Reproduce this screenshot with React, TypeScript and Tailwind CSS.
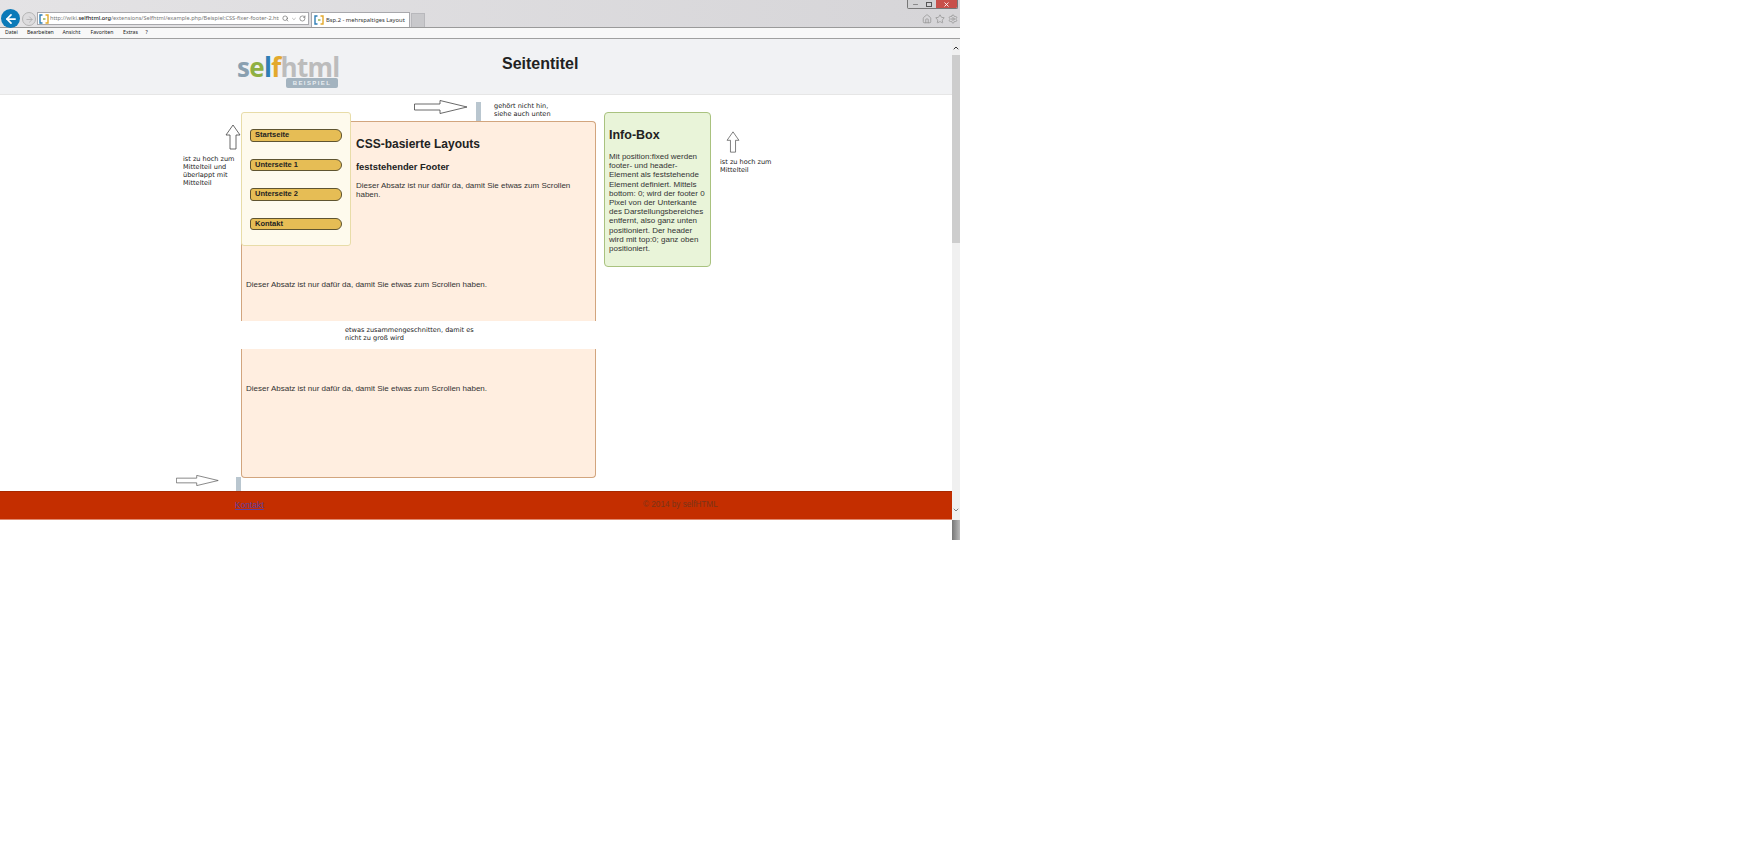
import React from "react";
import { ArrowLeft, ArrowRight, ChevronDown, ChevronUp, Home, RotateCw, Search, Settings, Star, X, Minus } from "lucide-react";

function Favicon() {
  return (
    <svg width="10" height="10" viewBox="0 0 10 10" className="shrink-0">
      <path d="M3.5 1H1v8h2.5" fill="none" stroke="#2f7fb5" strokeWidth="1.4" />
      <path d="M6.5 1H9v8H6.5" fill="none" stroke="#e3a92c" strokeWidth="1.4" />
      <path d="M4 5h2.5" fill="none" stroke="#8fb043" strokeWidth="1.4" />
    </svg>
  );
}

function UpArrow({ className }: { className: string }) {
  return (
    <svg width="16" height="26" viewBox="0 0 16 26" className={className}>
      <path d="M5 25V11H1L8 1l7 10h-4v14z" fill="#fff" stroke="#444" strokeWidth="0.8" />
    </svg>
  );
}

function RightArrow({ w, h, className }: { w: number; h: number; className: string }) {
  return (
    <svg width={w} height={h} viewBox="0 0 54 14" preserveAspectRatio="none" className={className}>
      <path d="M0.5 4H26V0.5L53 7 26 13.5V10H0.5z" fill="#fff" stroke="#444" strokeWidth="0.8" />
    </svg>
  );
}

const notes = "font-['DejaVu_Sans',sans-serif] text-[6.55px] leading-[8px] text-[#222]";

function NavButton({ label }: { label: string }) {
  return (
    <a className="block h-[12.5px] w-[92px] rounded-l-[3px] rounded-r-[6px] border border-[#5f5430] bg-[#e6bd55] pl-[4px] text-[7.5px] font-bold leading-[10px] text-[#222]">
      {label}
    </a>
  );
}

export default function App() {
  return (
    <div className="h-[854px] w-[1755px] overflow-hidden bg-white font-['Liberation_Sans',Arial,sans-serif]">
      <div className="w-[960px]">
        {/* browser toolbar */}
        <div className="relative flex h-[28px] items-end border-b border-[#9a9a9a] bg-gradient-to-r from-[#e4e3e5] to-[#d6d5d8] pl-[1px]">
          <div className="mb-[-1px] flex h-[19px] w-[19px] items-center justify-center rounded-full bg-[#0b7ab8]">
            <ArrowLeft size={14} strokeWidth={3} color="#fff" />
          </div>
          <div className="mb-[1px] ml-[2px] flex h-[14px] w-[14px] items-center justify-center rounded-full border border-[#b5b5b5] bg-[#dddcde]">
            <ArrowRight size={9} color="#aaa" />
          </div>
          <div className="mb-[2px] ml-[1px] flex h-[13px] w-[272px] items-center gap-[1px] border border-[#a8a8ac] bg-white pl-[1px] pr-[2px]">
            <Favicon />
            <div className="w-[235px] overflow-hidden whitespace-nowrap font-['Noto_Sans',sans-serif] text-[5.6px] leading-[11px] text-[#777]">
              http://wiki.<span className="font-medium text-[#222]">selfhtml.org</span>/extensions/Selfhtml/example.php/Beispiel:CSS-fixer-footer-2.htm
            </div>
            <Search size={7} color="#555" className="ml-[2px]" />
            <ChevronDown size={6} color="#777" className="ml-[1px]" />
            <RotateCw size={7} color="#555" className="ml-[1px]" />
          </div>
          <div className="ml-[2px] flex h-[15px] w-[99px] items-center gap-[2px] border border-b-0 border-[#a8a8ac] bg-white pl-[2px]">
            <Favicon />
            <span className="whitespace-nowrap font-['Noto_Sans',sans-serif] text-[5.8px] text-[#333]">Bsp.2 - mehrspaltiges Layout</span>
            <X size={7} color="#888" className="ml-[2px]" />
          </div>
          <div className="ml-[1px] h-[14px] w-[14px] border border-b-0 border-[#b8b8bc] bg-[#c8c8cb]" />
          <div className="mb-[3px] ml-auto flex items-center gap-[3px] pr-[2px]">
            <Home size={10} color="#999" />
            <Star size={10} color="#999" />
            <Settings size={10} color="#999" />
          </div>
          {/* window buttons */}
          <div className="absolute right-[2px] top-0 flex h-[9px] w-[51px] overflow-hidden rounded-b-[2px] border border-t-0 border-[#777]">
            <div className="flex w-[14px] items-center justify-center bg-[#d2d2d4]"><Minus size={7} color="#555" /></div>
            <div className="flex w-[14px] items-center justify-center bg-[#d2d2d4]"><div className="h-[5px] w-[6px] border border-[#555]" /></div>
            <div className="flex flex-1 items-center justify-center bg-[#c8504a]"><X size={7} color="#fff" strokeWidth={3} /></div>
          </div>
        </div>
        {/* menu bar */}
        <div className="flex h-[11px] items-center border-b border-[#a0a0a0] bg-[#f8f8f8] font-['Noto_Sans',sans-serif] text-[5.2px] text-[#222]">
          <span className="ml-[5px] w-[22px]">Datei</span>
          <span className="w-[35.5px]">Bearbeiten</span>
          <span className="w-[28px]">Ansicht</span>
          <span className="w-[32.5px]">Favoriten</span>
          <span className="w-[22.5px]">Extras</span>
          <span>?</span>
        </div>
        <div className="flex">
          <div className="w-[952px]">
            {/* page header */}
            <header className="flex h-[56px] border-b border-[#e6e6e6] bg-[#f1f2f4]">
              <div className="ml-[237px] mt-[16px] w-[102px]">
                <div className="h-[24px] whitespace-nowrap font-['Open_Sans',sans-serif] text-[26px] font-bold leading-[24px] tracking-[-0.7px]">
                  <span className="text-[#8aa0b0]">s</span>
                  <span className="text-[#8fb043]">e</span>
                  <span className="text-[#2f7fb5]">l</span>
                  <span className="text-[#e3a92c]">f</span>
                  <span className="text-[#bcbcbc]">html</span>
                </div>
                <div className="-mt-px ml-[49px] h-[10px] w-[52px] rounded-[2px] bg-[#a3b3bf] text-center font-['Liberation_Sans',sans-serif] text-[6px] font-bold leading-[10px] tracking-[1.4px] text-[#e8edf0]">
                  BEISPIEL
                </div>
              </div>
              <h1 className="ml-[163px] mt-[15px] text-[16px] font-bold leading-[20px] text-[#222]">Seitentitel</h1>
            </header>
            {/* page content */}
            <div className="relative flex h-[396px] pl-[241px] pt-[17px]">
              <main className="mt-[9px] w-[355px] text-[8px] leading-[9px] text-[#333]">
                <div className="h-[200px] rounded-t-[4px] border border-b-0 border-[#d2a57e] bg-[#ffeee0]">
                  <nav className="float-left -ml-px -mt-[10px] mr-[5px] flex h-[134px] w-[110px] flex-col gap-[17px] rounded-[3px] border border-[#e8dca8] bg-[#fefaed] pl-[8px] pt-[16px]">
                    <NavButton label="Startseite" />
                    <NavButton label="Unterseite 1" />
                    <NavButton label="Unterseite 2" />
                    <NavButton label="Kontakt" />
                  </nav>
                  <h2 className="pt-[15px] text-[12px] font-bold leading-[15px] text-[#222]">CSS-basierte Layouts</h2>
                  <h3 className="mt-[9px] text-[9.4px] font-bold leading-[12px] text-[#222]">feststehender Footer</h3>
                  <p className="mt-[8px] pr-[20px]">Dieser Absatz ist nur dafür da, damit Sie etwas zum Scrollen haben.</p>
                  <p className="clear-both pl-[4px] pt-[34px]">Dieser Absatz ist nur dafür da, damit Sie etwas zum Scrollen haben.</p>
                </div>
                <div className={`h-[28px] bg-white pl-[104px] pt-[5px] ${notes}`}>
                  etwas zusammengeschnitten, damit es<br />nicht zu groß wird
                </div>
                <div className="h-[129px] rounded-b-[4px] border border-t-0 border-[#d2a57e] bg-[#ffeee0] pl-[4px] pt-[34.5px]">
                  Dieser Absatz ist nur dafür da, damit Sie etwas zum Scrollen haben.
                </div>
              </main>
              <aside className="ml-[8px] h-[155px] w-[107px] rounded-[4px] border border-[#a9c27f] bg-[#e9f4d9] px-[4px] text-[8px] leading-[9.2px] text-[#333]">
                <h2 className="mt-[15px] text-[12.5px] font-bold leading-[15px] text-[#222]">Info-Box</h2>
                <p className="mt-[9px]">Mit position:fixed werden footer- und header-Element als feststehende Element definiert. Mittels bottom: 0; wird der footer 0 Pixel von der Unterkante des Darstellungsbereiches entfernt, also ganz unten positioniert. Der header wird mit top:0; ganz oben positioniert.</p>
              </aside>
              {/* annotations drawn over the page */}
              <RightArrow w={54} h={14} className="absolute left-[414px] top-[5px]" />
              <div className="absolute left-[476px] top-[7px] h-[19px] w-[5px] bg-[#b9c6cf]" />
              <div className={`absolute left-[494px] top-[7px] ${notes}`}>gehört nicht hin,<br />siehe auch unten</div>
              <UpArrow className="absolute left-[225px] top-[29px]" />
              <div className={`absolute left-[183px] top-[60px] ${notes}`}>ist zu hoch zum<br />Mittelteil und<br />überlappt mit<br />Mittelteil</div>
              <UpArrow className="absolute left-[725px] top-[36px] h-[22px]" />
              <div className={`absolute left-[720px] top-[63px] ${notes}`}>ist zu hoch zum<br />Mittelteil</div>
              <RightArrow w={43} h={11} className="absolute left-[176px] top-[380px]" />
              <div className="absolute left-[236px] top-[382px] h-[14px] w-[5px] bg-[#b9c6cf]" />
            </div>
            {/* page footer */}
            <footer className="flex h-[29px] items-center border-t border-b border-t-[#a82800] border-b-[#e08a70] bg-[#c42e00] text-[8.2px]">
              <a className="ml-[235px] w-[408px] text-[8.5px] text-[#5a3fa0] underline">Kontakt</a>
              <span className="text-[#7a3418]">© 2014 by selfHTML</span>
            </footer>
          </div>
          {/* scrollbar */}
          <div className="flex h-[501px] w-[8px] flex-col items-center bg-[#f0f0f0]">
            <ChevronUp size={8} strokeWidth={3} color="#333" className="mt-[5px]" />
            <div className="mt-[3px] h-[188px] w-[8px] bg-[#cdcdcd]" />
            <div className="flex-1" />
            <ChevronDown size={8} strokeWidth={2} color="#444" className="mb-[6px]" />
            <div className="h-[20px] w-[8px] bg-gradient-to-r from-[#777] to-[#bbb]" />
          </div>
        </div>
      </div>
    </div>
  );
}
